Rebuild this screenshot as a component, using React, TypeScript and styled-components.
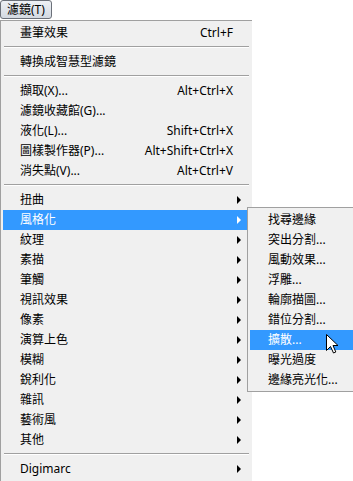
import React from "react";
import styled, { createGlobalStyle } from "styled-components";

const GlobalStyle = createGlobalStyle`
  html, body {
    margin: 0;
    padding: 0;
    background: #ffffff;
    overflow: hidden;
  }
  body {
    font-family: "Noto Sans", "Noto Sans CJK TC", sans-serif;
    font-size: 12px;
    color: #000000;
  }
`;

const Page = styled.div`
  width: 353px;
  height: 481px;
  position: relative;
`;

const TopBar = styled.div`
  height: 20px;
  display: flex;
  align-items: flex-start;
`;

const MenuButton = styled.div`
  box-sizing: border-box;
  width: 52px;
  height: 19px;
  border: 1px solid #6b7079;
  border-radius: 3px;
  background: linear-gradient(#eef1f5, #d3d9e1);
  display: flex;
  align-items: center;
  padding-left: 6px;
  line-height: 17px;
`;

const Menu = styled.div`
  box-sizing: border-box;
  width: 252px;
  background: #f0f0f0;
  border-top: 1px solid #a0a0a0;
  border-left: 1px solid #a0a0a0;
  padding: 2px 2px 2px 2px;
`;

const SubMenu = styled.div`
  box-sizing: border-box;
  position: absolute;
  left: calc(100% - 3px);
  top: -3px;
  width: 110px;
  background: #f0f0f0;
  border: 1px solid #a0a0a0;
  border-right: none;
  padding: 2px 4px 1px 2px;
  color: #000000;
  z-index: 2;
`;

const Row = styled.div<{ $active?: boolean; $indent?: number }>`
  position: relative;
  height: 20px;
  line-height: 20px;
  display: flex;
  align-items: center;
  padding: 0 8px 0 ${({ $indent }) => $indent ?? 17}px;
  white-space: nowrap;
  background: ${({ $active }) => ($active ? "#3399ff" : "transparent")};
  color: ${({ $active }) => ($active ? "#ffffff" : "#000000")};
`;

const Label = styled.span`
  flex: 1;
`;

const Shortcut = styled.span`
  margin-right: 9px;
`;

const Arrow = styled.span<{ $active?: boolean }>`
  width: 0;
  height: 0;
  border-top: 4px solid transparent;
  border-bottom: 4px solid transparent;
  border-left: 4px solid ${({ $active }) => ($active ? "#ffffff" : "#000000")};
  margin-right: 1px;
`;

const Separator = styled.div`
  height: 9px;
  display: flex;
  flex-direction: column;
  padding-top: 3px;
  box-sizing: border-box;
  &::before {
    content: "";
    display: block;
    height: 1px;
    margin: 0 1px;
    background: #a0a0a0;
  }
  &::after {
    content: "";
    display: block;
    height: 1px;
    margin: 0 1px;
    background: #ffffff;
  }
`;

const Pointer = styled.svg`
  position: absolute;
  left: 76px;
  top: 4px;
  z-index: 3;
`;

type Item = {
  label: string;
  shortcut?: string;
  arrow?: boolean;
  sub?: boolean;
};

const groups: Item[][] = [
  [{ label: "畫筆效果", shortcut: "Ctrl+F" }],
  [{ label: "轉換成智慧型濾鏡" }],
  [
    { label: "擷取(X)...", shortcut: "Alt+Ctrl+X" },
    { label: "濾鏡收藏館(G)..." },
    { label: "液化(L)...", shortcut: "Shift+Ctrl+X" },
    { label: "圖樣製作器(P)...", shortcut: "Alt+Shift+Ctrl+X" },
    { label: "消失點(V)...", shortcut: "Alt+Ctrl+V" },
  ],
  [
    { label: "扭曲", arrow: true },
    { label: "風格化", arrow: true, sub: true },
    { label: "紋理", arrow: true },
    { label: "素描", arrow: true },
    { label: "筆觸", arrow: true },
    { label: "視訊效果", arrow: true },
    { label: "像素", arrow: true },
    { label: "演算上色", arrow: true },
    { label: "模糊", arrow: true },
    { label: "銳利化", arrow: true },
    { label: "雜訊", arrow: true },
    { label: "藝術風", arrow: true },
    { label: "其他", arrow: true },
  ],
  [{ label: "Digimarc", arrow: true }],
];

const stylize = [
  "找尋邊緣",
  "突出分割...",
  "風動效果...",
  "浮雕...",
  "輪廓描圖...",
  "錯位分割...",
  "擴散...",
  "曝光過度",
  "邊緣亮光化...",
];

const MouseCursor = () => (
  <Pointer width="13" height="20" viewBox="0 0 13 20">
    <path
      d="M0.5 0.5 L0.5 16.5 L4.5 12.5 L7.5 19 L9.8 18 L7 11.5 L12 11.5 Z"
      fill="#ffffff"
      stroke="#000000"
      strokeWidth="1"
      strokeLinejoin="miter"
    />
  </Pointer>
);

const StylizeMenu = () => (
  <SubMenu>
    {stylize.map((name) => {
      const active = name === "擴散...";
      return (
        <Row key={name} $active={active} $indent={18}>
          <Label>{name}</Label>
          {active && <MouseCursor />}
        </Row>
      );
    })}
  </SubMenu>
);

export default function App() {
  return (
    <Page>
      <GlobalStyle />
      <TopBar>
        <MenuButton>濾鏡(T)</MenuButton>
      </TopBar>
      <Menu>
        {groups.map((group, gi) => (
          <React.Fragment key={gi}>
            {gi > 0 && <Separator />}
            {group.map((item) => (
              <Row key={item.label} $active={item.sub}>
                <Label>{item.label}</Label>
                {item.shortcut && <Shortcut>{item.shortcut}</Shortcut>}
                {item.arrow && <Arrow $active={item.sub} />}
                {item.sub && <StylizeMenu />}
              </Row>
            ))}
          </React.Fragment>
        ))}
      </Menu>
    </Page>
  );
}
